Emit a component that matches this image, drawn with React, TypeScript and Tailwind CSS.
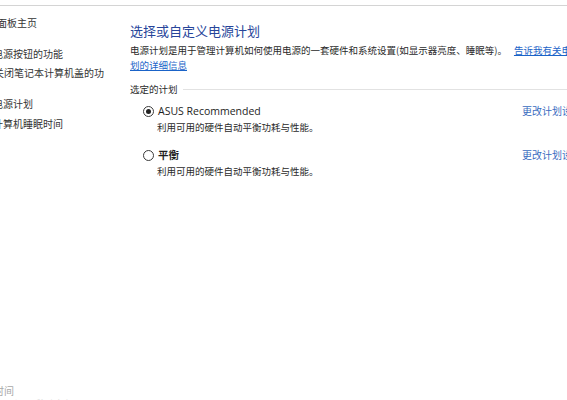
import React from "react";

const cjk = "font-['Noto_Sans_CJK_SC','Noto_Sans',sans-serif]";

const sideLinks = [
  { text: "控制面板主页", cls: "mt-[9px] -ml-[23px]" },
  { text: "选择电源按钮的功能", cls: "mt-[15px] -ml-[27px]" },
  { text: "选择关闭笔记本计算机盖的功能", cls: "mt-[3px] -ml-[26px]" },
  { text: "创建电源计划", cls: "mt-[15px] -ml-[27px]" },
  { text: "更改计算机睡眠时间", cls: "mt-[4px] -ml-[27px]" },
];

interface IPlan {
  name: string;
  desc: string;
  checked: boolean;
  latin: boolean;
}

const plans: IPlan[] = [
  { name: "ASUS Recommended", desc: "利用可用的硬件自动平衡功耗与性能。", checked: true, latin: true },
  { name: "平衡", desc: "利用可用的硬件自动平衡功耗与性能。", checked: false, latin: false },
];

const Radio = ({ checked }: { checked: boolean }) => (
  <span className="flex h-[11px] w-[11px] items-center justify-center rounded-full border border-[#3a3a3a] bg-white">
    {checked && <span className="h-[5px] w-[5px] rounded-full bg-[#222]" />}
  </span>
);

const App = () => {
  return (
    <div className={`flex h-[400px] w-[567px] flex-col overflow-hidden bg-white ${cjk}`}>
      <div className="h-[6px] shrink-0 border-b border-[#d4d4d4]" />
      <div className="flex flex-1">
        {/* left task pane, clipped */}
        <aside className="flex w-[104px] shrink-0 flex-col overflow-hidden text-[10px] leading-[16px] text-[#333]">
          {sideLinks.map((l) => (
            <div key={l.text} className={`whitespace-nowrap ${l.cls}`}>
              {l.text}
            </div>
          ))}
          <div className="mt-auto -ml-[6px] whitespace-nowrap text-[10px] leading-[14px] text-[#a8a8a8]">
            时间
          </div>
          <div className="-ml-[4px] mb-[-6px] h-[8px] whitespace-nowrap text-[9px] leading-[12px] text-[#e0e0e0]">
            Windows 移动中心
          </div>
        </aside>

        {/* main content */}
        <main className="ml-[26px] w-[452px] shrink-0 pt-[16px]">
          <h1 className="text-[13px] font-normal leading-[18px] text-[#27459a]">选择或自定义电源计划</h1>
          <p className="mt-[3px] whitespace-nowrap text-[9.5px] leading-[15px] text-[#2a2a2a]">
            电源计划是用于管理计算机如何使用电源的一套硬件和系统设置(如显示器亮度、睡眠等)。
            <a className="ml-[7px] text-[#1a63c8] underline">告诉我有关电源计</a>
            <br />
            <a className="text-[#1a63c8] underline">划的详细信息</a>
          </p>

          <div className="mt-[9px] flex items-center gap-[5px] text-[9.5px] leading-[15px] text-[#2a2a2a]">
            <span className="whitespace-nowrap">选定的计划</span>
            <span className="h-px flex-1 bg-[#e2e2e2]" />
          </div>

          {plans.map((p, i) => (
            <div key={p.name} className={i === 0 ? "mt-[6px]" : "mt-[12px]"}>
              <div className="flex h-[16px] items-center">
                <span className="ml-[13px] mr-[4px]">
                  <Radio checked={p.checked} />
                </span>
                <span
                  className={
                    p.latin
                      ? "font-['Open_Sans',sans-serif] text-[10.5px] font-medium leading-[16px] text-[#1e1e1e]"
                      : "text-[10.5px] font-bold leading-[16px] text-[#1e1e1e]"
                  }
                >
                  {p.name}
                </span>
                <a className="ml-auto whitespace-nowrap text-[10px] leading-[16px] text-[#3a6cc0]">更改计划设置</a>
              </div>
              <div className="ml-[27px] mt-[1px] text-[9.5px] leading-[15px] text-[#2a2a2a]">{p.desc}</div>
            </div>
          ))}
        </main>
      </div>
    </div>
  );
};

export default App;
